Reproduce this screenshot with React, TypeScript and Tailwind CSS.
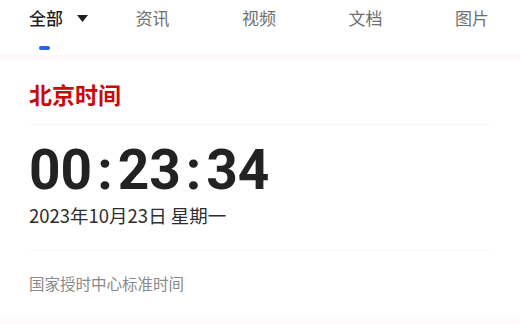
import * as React from 'react';

const tabs = ['资讯', '视频', '文档', '图片'];

const cjk = { fontFamily: '"Noto Sans CJK SC", "Noto Sans", sans-serif' };

export default function App() {
  return (
    <div className="w-[520px] h-[324px] overflow-hidden bg-white" style={cjk}>
      {/* Tab bar */}
      <div className="h-[55px] pt-[5px]">
        <div className="flex pl-[29px] overflow-hidden">
          <div className="w-[106.5px] shrink-0">
            <div className="flex items-center h-[26px] text-[17px] font-medium text-[#1f1f1f]">
              全部
              <svg width="11" height="7" viewBox="0 0 11 7" className="ml-[14px]">
                <path d="M0 0 H11 L5.5 7 Z" fill="#1f1f1f" />
              </svg>
            </div>
            <div className="ml-[10px] mt-[15px] h-[4px] w-[11px] rounded-full bg-[#2b62e3]" />
          </div>
          {tabs.map((t) => (
            <div key={t} className="w-[106.5px] shrink-0 h-[26px] flex items-center text-[17px] text-[#707070]">
              {t}
            </div>
          ))}
        </div>
      </div>
      <div className="h-[8px] bg-gradient-to-b from-[#fdf5f9] to-white" />

      {/* Content */}
      <div className="px-[29px]">
        <div className="pt-[16px] pb-[15px] text-[23px] leading-[30px] font-bold text-[#c80a0a]">北京时间</div>
        <div className="h-px bg-[#f7f7f7]" />
        <div
          className="mt-[17px] flex items-center h-[56px] text-[55px] font-bold text-[#222] leading-none"
          style={{ fontFamily: 'Roboto, Inter, sans-serif' }}
        >
          <span>00</span>
          <span className="mx-[5px]">:</span>
          <span>23</span>
          <span className="mx-[5px]">:</span>
          <span>34</span>
        </div>
        <div className="mt-[5px] text-[18.5px] leading-[24px] text-[#2e2e2e]">2023年10月23日 星期一</div>
        <div className="mt-[23px] h-px bg-[#f7f7f7]" />
        <div className="mt-[20px] text-[15.5px] leading-[24px] text-[#8a8a8a]">国家授时中心标准时间</div>
      </div>
      <div className="mt-[22px] h-[8px] bg-gradient-to-b from-white to-[#fdf5f9]" />
    </div>
  );
}
